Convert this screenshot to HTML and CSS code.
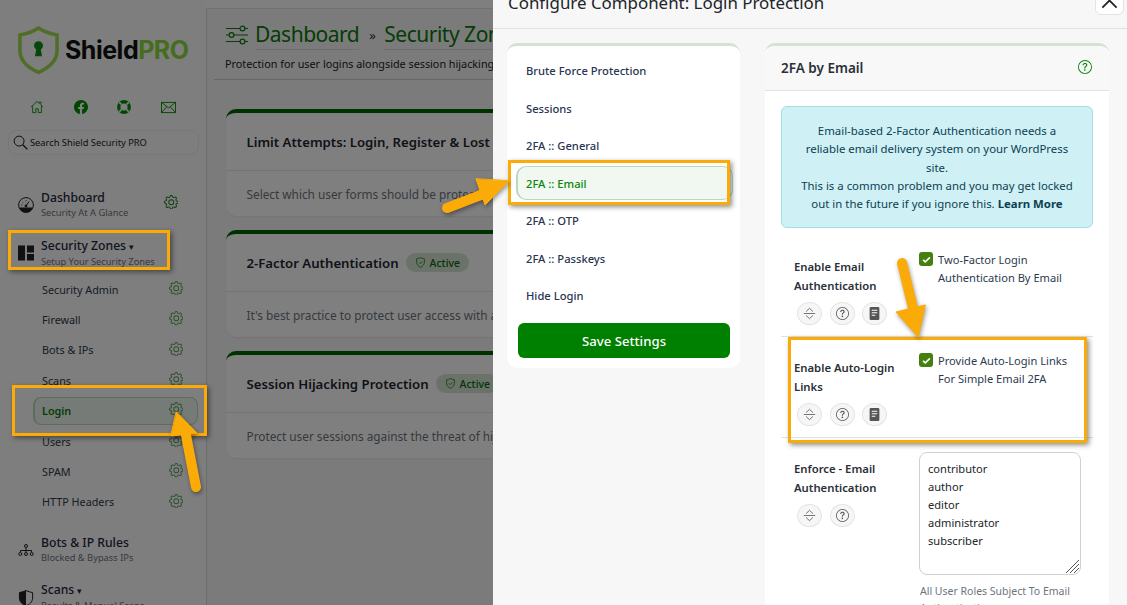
FILE: index.html
```html
<!DOCTYPE html>
<html lang="en">
<head>
<meta charset="utf-8">
<title>Shield Security PRO</title>
<link rel="stylesheet" href="styles.css">
</head>
<body>
<svg class="defs" width="0" height="0" aria-hidden="true">
  <symbol id="gear" viewBox="0 0 16 16">
    <path d="M8 4.754a3.246 3.246 0 1 0 0 6.492 3.246 3.246 0 0 0 0-6.492zM5.754 8a2.246 2.246 0 1 1 4.492 0 2.246 2.246 0 0 1-4.492 0z"/>
    <path d="M9.796 1.343c-.527-1.79-3.065-1.79-3.592 0l-.094.319a.873.873 0 0 1-1.255.52l-.292-.16c-1.64-.892-3.433.902-2.54 2.541l.159.292a.873.873 0 0 1-.52 1.255l-.319.094c-1.79.527-1.79 3.065 0 3.592l.319.094a.873.873 0 0 1 .52 1.255l-.16.292c-.892 1.64.901 3.434 2.541 2.54l.292-.159a.873.873 0 0 1 1.255.52l.094.319c.527 1.79 3.065 1.79 3.592 0l.094-.319a.873.873 0 0 1 1.255-.52l.292.16c1.64.893 3.434-.902 2.54-2.541l-.159-.292a.873.873 0 0 1 .52-1.255l.319-.094c1.79-.527 1.79-3.065 0-3.592l-.319-.094a.873.873 0 0 1-.52-1.255l.16-.292c.893-1.64-.902-3.433-2.541-2.54l-.292.159a.873.873 0 0 1-1.255-.52l-.094-.319zm-2.633.283c.246-.835 1.428-.835 1.674 0l.094.319a1.873 1.873 0 0 0 2.693 1.115l.291-.16c.764-.415 1.6.42 1.184 1.185l-.159.292a1.873 1.873 0 0 0 1.116 2.692l.318.094c.835.246.835 1.428 0 1.674l-.319.094a1.873 1.873 0 0 0-1.115 2.693l.16.291c.415.764-.42 1.6-1.185 1.184l-.291-.159a1.873 1.873 0 0 0-2.693 1.116l-.094.318c-.246.835-1.428.835-1.674 0l-.094-.319a1.873 1.873 0 0 0-2.692-1.115l-.292.16c-.764.415-1.6-.42-1.184-1.185l.159-.291A1.873 1.873 0 0 0 1.945 8.93l-.319-.094c-.835-.246-.835-1.428 0-1.674l.319-.094A1.873 1.873 0 0 0 3.06 4.377l-.16-.292c-.415-.764.42-1.6 1.185-1.184l.292.159a1.873 1.873 0 0 0 2.692-1.115l.094-.319z"/>
  </symbol>
  <symbol id="question" viewBox="0 0 16 16">
    <path d="M8 15A7 7 0 1 1 8 1a7 7 0 0 1 0 14zm0 1A8 8 0 1 0 8 0a8 8 0 0 0 0 16z"/>
    <path d="M5.255 5.786a.237.237 0 0 0 .241.247h.825c.138 0 .248-.113.266-.25.09-.656.54-1.134 1.342-1.134.686 0 1.314.343 1.314 1.168 0 .635-.374.927-.965 1.371-.673.489-1.206 1.06-1.168 1.987l.003.217a.25.25 0 0 0 .25.246h.811a.25.25 0 0 0 .25-.25v-.105c0-.718.273-.927 1.01-1.486.609-.463 1.244-.977 1.244-2.056 0-1.511-1.276-2.241-2.673-2.241-1.267 0-2.655.59-2.75 2.286zm1.557 5.763c0 .533.425.927 1.01.927.609 0 1.028-.394 1.028-.927 0-.552-.42-.94-1.029-.94-.584 0-1.009.388-1.009.94z"/>
  </symbol>
  <symbol id="expand" viewBox="0 0 16 16">
    <path d="M1 8h14" fill="none" stroke="currentColor" stroke-width="1"/>
    <path d="M3.8 5.6 8 1.6l4.2 4M3.8 10.4 8 14.4l4.2-4" fill="none" stroke="currentColor" stroke-width="1"/>
  </symbol>
  <symbol id="doc" viewBox="0 0 16 16">
    <path d="M3.6 0h8.8A1.6 1.6 0 0 1 14 1.6v12.8a1.6 1.6 0 0 1-1.6 1.6H3.6A1.6 1.6 0 0 1 2 14.4V1.6A1.6 1.6 0 0 1 3.6 0z"/>
    <path d="M4.6 3.4h6.8v1.3H4.6zM4.6 6.4h6.8v1.3H4.6zM4.6 9.4h4.4v1.3H4.6z" fill="#fff"/>
  </symbol>
</svg>

<div class="page">
  <aside class="sidebar">
    <div class="logo">
      <svg class="logo-mark" viewBox="0 0 42 50" width="41" height="49">
        <path d="M21 2 C15 6 8 8 2 9 V25 C2 36 11 43 21 47.500 C31 43 40 36 40 25 V9 C34 8 27 6 21 2 Z" fill="none" stroke="#9fdc4f" stroke-width="3.600"/>
        <circle cx="21" cy="20" r="4.600" fill="#0f8f12"/>
        <path d="M19 22h4l1.600 9h-7.200z" fill="#0f8f12"/>
      </svg>
      <span class="logo-text">Shield<b>PRO</b></span>
    </div>
    <div class="quick">
      <svg viewBox="0 0 16 16" width="14" height="14" class="qi"><path d="M1 8.200 8 1.600l2.600 2.400V2.400h2v3.400L15 8.200M3 7v7.400h3.600v-4.400h2.800v4.400H13V7" fill="none" stroke="currentColor"/></svg>
      <svg viewBox="0 0 16 16" width="14" height="14" class="qi" fill="currentColor"><path d="M16 8.049c0-4.446-3.582-8.05-8-8.05C3.58 0-.002 3.603-.002 8.05c0 4.017 2.926 7.347 6.75 7.951v-5.625h-2.03V8.05H6.75V6.275c0-2.017 1.195-3.131 3.022-3.131.876 0 1.791.157 1.791.157v1.98h-1.009c-.993 0-1.303.621-1.303 1.258v1.51h2.218l-.354 2.326H9.25V16c3.824-.604 6.75-3.934 6.75-7.951z"/></svg>
      <svg viewBox="0 0 16 16" width="14" height="14" class="qi"><circle cx="8" cy="8" r="6" fill="none" stroke="currentColor" stroke-width="3.800"/><path d="M2.600 2.600 5 5M13.400 2.600 11 5M2.600 13.400 5 11M13.400 13.400 11 11" stroke="#fff" stroke-width="2"/></svg>
      <svg viewBox="0 0 16 14" width="15" height="13" class="qi"><rect x=".5" y="1.500" width="15" height="11" fill="none" stroke="currentColor"/><path d="M.5 1.500 8 7.500l7.500-6M.5 12.500 6 6.200M15.500 12.500 10 6.200" fill="none" stroke="currentColor"/></svg>
    </div>
    <div class="search">
      <svg viewBox="0 0 16 16" width="15" height="15"><circle cx="6.500" cy="6.500" r="5.300" fill="none" stroke="#111" stroke-width="1"/><path d="m10.400 10.400 5 5" stroke="#111" stroke-width="1.300"/></svg>
      <span>Search Shield Security PRO</span>
    </div>
    <nav class="nav">
      <div class="nav-main">
        <svg viewBox="0 0 16 16" width="16" height="16" class="nav-ic"><circle cx="8" cy="8" r="7.400" fill="none" stroke="#222" stroke-width="1"/><path d="M1.200 10.400h13.600A7.400 7.400 0 0 1 8 15.400a7.400 7.400 0 0 1-6.800-5z" fill="#222"/><circle cx="8" cy="9" r="1.400" fill="#222"/><path d="m8 9 3-4.400" stroke="#222"/><path d="M3.400 8h1M4.600 5.200l.7.6M8 3.400v1" stroke="#222"/></svg>
        <div class="nav-txt"><div class="nav-title">Dashboard</div><div class="nav-sub">Security At A Glance</div></div>
        <svg class="gear gear-main"><use href="#gear"/></svg>
      </div>
      <div class="nav-main">
        <svg viewBox="0 0 16 16" width="16" height="16" class="nav-ic"><path d="M0 .5h7v15H0zM9 .5h7v7H9zM9 9h7v6.500H9z" fill="#222"/></svg>
        <div class="nav-txt"><div class="nav-title">Security Zones <span class="caret">▾</span></div><div class="nav-sub">Setup Your Security Zones</div></div>
      </div>
      <ul class="nav-list">
        <li>Security Admin<svg class="gear"><use href="#gear"/></svg></li>
        <li>Firewall<svg class="gear"><use href="#gear"/></svg></li>
        <li>Bots &amp; IPs<svg class="gear"><use href="#gear"/></svg></li>
        <li>Scans<svg class="gear"><use href="#gear"/></svg></li>
        <li class="on">Login<svg class="gear"><use href="#gear"/></svg></li>
        <li>Users<svg class="gear"><use href="#gear"/></svg></li>
        <li>SPAM<svg class="gear"><use href="#gear"/></svg></li>
        <li>HTTP Headers<svg class="gear"><use href="#gear"/></svg></li>
      </ul>
      <div class="nav-main nav-gap">
        <svg viewBox="0 0 16 12" width="16" height="12" class="nav-ic"><path d="M8 4v2.500M2.500 8V6.500h11V8M8 6.500V8" fill="none" stroke="#222"/><circle cx="8" cy="2" r="1.500" fill="none" stroke="#222"/><circle cx="2.300" cy="10" r="1.500" fill="none" stroke="#222"/><circle cx="8" cy="10" r="1.500" fill="none" stroke="#222"/><circle cx="13.700" cy="10" r="1.500" fill="none" stroke="#222"/></svg>
        <div class="nav-txt"><div class="nav-title">Bots &amp; IP Rules</div><div class="nav-sub">Blocked &amp; Bypass IPs</div></div>
      </div>
      <div class="nav-main">
        <svg viewBox="0 0 16 16" width="16" height="16" class="nav-ic"><path d="M8 .6C5.800 1.500 3.600 2.200 1.400 2.600v5.200C1.400 12 4.500 14.600 8 15.600c3.500-1 6.600-3.600 6.600-7.800V2.600C12.400 2.200 10.200 1.500 8 .6z" fill="none" stroke="#222"/><path d="M8 .6v15C4.500 14.600 1.400 12 1.400 7.800V2.600C3.600 2.200 5.800 1.500 8 .6z" fill="#222"/></svg>
        <div class="nav-txt"><div class="nav-title">Scans <span class="caret">▾</span></div><div class="nav-sub">Results &amp; Manual Scans</div></div>
      </div>
    </nav>
  </aside>

  <main class="main">
    <div class="crumbs">
      <svg viewBox="0 0 22 20" width="22" height="20" class="crumb-ic"><path d="M0 3.500h14M19 3.500h3M0 10h3M8 10h14M0 16.500h14M19 16.500h3" stroke="currentColor" fill="none" stroke-width="1.200"/><circle cx="16.500" cy="3.500" r="2.400" fill="none" stroke="currentColor" stroke-width="1.200"/><circle cx="5.500" cy="10" r="2.400" fill="none" stroke="currentColor" stroke-width="1.200"/><circle cx="16.500" cy="16.500" r="2.400" fill="none" stroke="currentColor" stroke-width="1.200"/></svg>
      <span class="crumb">Dashboard</span><span class="crumb-sep">»</span><span class="crumb">Security Zones</span>
    </div>
    <p class="lede">Protection for user logins alongside session hijacking protection</p>
    <section class="card">
      <h3 class="card-head">Limit Attempts: Login, Register &amp; Lost Password</h3>
      <p class="card-body">Select which user forms should be protected</p>
    </section>
    <section class="card">
      <h3 class="card-head">2-Factor Authentication <span class="badge"><svg viewBox="0 0 16 16" width="11" height="11"><path d="M8 1C6 1.800 4.300 2.400 2.300 2.700v4.800C2.300 11 5 13.700 8 15c3-1.300 5.700-4 5.700-7.500V2.700C11.700 2.400 10 1.800 8 1z" fill="none" stroke="currentColor"/><path d="m5.500 7.700 2 2 3.200-3.400" fill="none" stroke="currentColor"/></svg>Active</span></h3>
      <p class="card-body">It's best practice to protect user access with at least 1 additional factor</p>
    </section>
    <section class="card">
      <h3 class="card-head">Session Hijacking Protection <span class="badge"><svg viewBox="0 0 16 16" width="11" height="11"><path d="M8 1C6 1.800 4.300 2.400 2.300 2.700v4.800C2.300 11 5 13.700 8 15c3-1.300 5.700-4 5.700-7.500V2.700C11.700 2.400 10 1.800 8 1z" fill="none" stroke="currentColor"/><path d="m5.500 7.700 2 2 3.200-3.400" fill="none" stroke="currentColor"/></svg>Active</span></h3>
      <p class="card-body">Protect user sessions against the threat of hijacking</p>
    </section>
  </main>

  <div class="backdrop"></div>

  <aside class="panel">
    <header class="panel-head">
      <h2>Configure Component: Login Protection</h2>
      <button class="close" aria-label="Close"><svg viewBox="0 0 16 16" width="19" height="19"><path d="M2 2 14 14M14 2 2 14" stroke="#222" stroke-width="1.500" fill="none"/></svg></button>
    </header>
    <div class="panel-body">
      <div class="menu">
        <a>Brute Force Protection</a>
        <a>Sessions</a>
        <a>2FA :: General</a>
        <a class="on">2FA :: Email</a>
        <a>2FA :: OTP</a>
        <a>2FA :: Passkeys</a>
        <a>Hide Login</a>
        <button class="save">Save Settings</button>
      </div>
      <div class="form">
        <div class="form-head"><h3>2FA by Email</h3><svg class="help"><use href="#question"/></svg></div>
        <div class="form-body">
          <div class="alert">Email-based 2-Factor Authentication needs a reliable email delivery system on your WordPress site.<br>This is a common problem and you may get locked out in the future if you ignore this. <b>Learn More</b></div>
          <div class="opt opt-first">
            <div class="opt-l">
              <div class="opt-name">Enable Email Authentication</div>
              <div class="opt-tools">
                <span class="tool"><svg><use href="#expand"/></svg></span><span class="tool"><svg><use href="#question"/></svg></span><span class="tool"><svg><use href="#doc"/></svg></span>
              </div>
            </div>
            <label class="check"><span class="box"><svg viewBox="0 0 16 16" width="11" height="11"><path d="m3 8.500 3.200 3L13 5" fill="none" stroke="#fff" stroke-width="2.400"/></svg></span><span>Two-Factor Login Authentication By Email</span></label>
          </div>
          <div class="opt">
            <div class="opt-l">
              <div class="opt-name">Enable Auto-Login Links</div>
              <div class="opt-tools">
                <span class="tool"><svg><use href="#expand"/></svg></span><span class="tool"><svg><use href="#question"/></svg></span><span class="tool"><svg><use href="#doc"/></svg></span>
              </div>
            </div>
            <label class="check"><span class="box"><svg viewBox="0 0 16 16" width="11" height="11"><path d="m3 8.500 3.200 3L13 5" fill="none" stroke="#fff" stroke-width="2.400"/></svg></span><span>Provide Auto-Login Links For Simple Email 2FA</span></label>
          </div>
          <div class="opt opt-last">
            <div class="opt-l">
              <div class="opt-name">Enforce - Email Authentication</div>
              <div class="opt-tools">
                <span class="tool"><svg><use href="#expand"/></svg></span><span class="tool"><svg><use href="#question"/></svg></span>
              </div>
            </div>
            <div class="opt-r">
              <div class="roles">contributor<br>author<br>editor<br>administrator<br>subscriber<svg class="grip" viewBox="0 0 14 14" width="14" height="14"><path d="M1 14 14 1M5 14 14 5M9 14 14 9" stroke="#555" fill="none"/></svg></div>
              <p class="hint">All User Roles Subject To Email Authentication</p>
            </div>
          </div>
        </div>
      </div>
    </div>
  </aside>

  <div class="mark mark-zones"></div>
  <div class="mark mark-login"></div>
  <div class="mark mark-email"></div>
  <div class="mark mark-auto"></div>
  <svg class="arrows" viewBox="0 0 1127 605" width="1127" height="605">
    <g class="arrow">
      <path d="M196 487 185 430"/><path class="head" d="M176.500 412 197 433 171 436z"/>
      <path d="M447 208 486 193"/><path class="head" d="M509 181 485 205 476 179z"/>
      <path d="M902 263 914 312"/><path class="head" d="M918 337 896 312 925 305z"/>
    </g>
  </svg>
</div>
</body>
</html>
```

FILE: styles.css
```css
* { box-sizing: border-box; }
html, body { margin: 0; padding: 0; height: 100%; }
body { font-family: "Noto Sans", "Open Sans", sans-serif; color: #212529; background: #fff; overflow: hidden; }
.defs { position: absolute; }
svg { display: block; flex: none; fill: currentColor; }

.page { position: relative; width: 1127px; height: 605px; overflow: hidden; display: flex; background: #fff; }

/* Sidebar */
.sidebar { width: 206px; flex: none; background: #fcfcfc; padding: 25px 8px 0; }
.logo { display: flex; align-items: center; gap: 6px; padding-left: 10px; height: 50px; }
.logo-mark { width: 41px; height: 49px; }
.logo-text { font-family: "Inter", sans-serif; font-weight: 700; font-size: 25px; letter-spacing: -.5px; color: #111; }
.logo-text b { color: #8ddb3a; font-weight: 700; }
.quick { display: flex; justify-content: space-between; align-items: center; padding: 0 22px; margin-top: 24px; height: 16px; color: #008f00; }
.search { display: flex; align-items: center; gap: 2px; margin-top: 15px; height: 25px; width: 191px; padding-left: 4px; border: 1px solid #efefef; border-radius: 8px; font-size: 9.300px; color: #222; }
.nav { margin-top: 26px; }
.nav-main { display: flex; align-items: center; height: 48px; padding: 0 10px; position: relative; }
.nav-ic { margin-right: 7px; }
.nav-txt { flex: 1; padding-bottom: 1px; }
.nav-title { font-size: 12.200px; line-height: 15px; font-weight: 500; color: #1f2a40; }
.nav-sub { margin-top: 1px; font-size: 9.300px; line-height: 13px; color: #6c757d; }
.caret { font-size: 9px; }
.gear { width: 14.500px; height: 14.500px; color: #1b7a1b; }
.gear-main { margin-right: 10px; margin-top: -6px; }
.nav-list { list-style: none; margin: -3px 0 0; padding: 0; }
.nav-list li { display: flex; align-items: center; justify-content: space-between; height: 30.400px; margin-left: 25px; padding: 0 15px 0 9px; font-size: 10.800px; color: #2e3a4a; }
.nav-list li.on { color: #0a7a0a; font-weight: 600; background: #eef6ee; border: 1px solid #bcd6bc; border-left-width: 2px; border-radius: 8px; height: 28px; margin-top: 1px; margin-bottom: 1.300px; padding-left: 7px; padding-right: 14px; }
.nav-list .gear { color: #5aa05a; margin-top: -2px; }
.nav-gap { margin-top: 8.500px; }

/* Main */
.main { flex: none; width: 921px; margin-top: 8px; border-left: 1px solid #cfe0cf; border-top: 1px solid #dfe6df; background: #f6f6f6; padding: 0 0 0 19px; }
.crumbs { display: flex; align-items: center; height: 51px; color: #0a7a0a; font-size: 21px; letter-spacing: -.5px; white-space: nowrap; }
.crumb-ic { margin-right: 7px; }
.crumb { border-bottom: 1px solid #ddd; line-height: 29px; }
.crumb-sep { font-size: 13px; margin: 0 9px 0 10px; color: #333; }
.lede { margin: -3px 0 0 -12px; padding: 0 0 0 11px; height: 23px; font-size: 10.800px; line-height: 14px; color: #222; border-bottom: 1px solid #cfcfcf; }
.card { width: 640px; height: 107px; margin: 0 0 14px; background: #fff; border-top: 4px solid #006400; border-radius: 10px; overflow: hidden; box-shadow: 0 1px 2px rgba(0,0,0,.06); }
.lede + .card { margin-top: 29px; }
.card-head { margin: 0; height: 58px; padding-left: 20.500px; display: flex; align-items: center; gap: 7px; font-size: 13.200px; font-weight: 600; color: #1f2530; white-space: nowrap; border-bottom: 1px solid #e6e6e6; }
.card-body { margin: 0; padding: 15px 0 0 20.500px; font-size: 11.800px; color: #6c757d; white-space: nowrap; }
.badge { display: inline-flex; align-items: center; gap: 4px; height: 19px; padding: 0 9px; border-radius: 10px; background: #d4e5d4; color: #0a6a0a; font-size: 10.500px; font-weight: 500; }

.backdrop { position: absolute; inset: 0; background: rgba(0,0,0,.5); }

/* Panel */
.panel { position: absolute; top: 0; right: 0; bottom: 0; width: 634px; background: #f7f7f7; overflow: hidden; }
.panel-head { height: 29px; border-bottom: 1px solid #dee2e6; padding: 0 2px 0 15px; position: relative; }
.panel-head h2 { margin: 0; font-size: 16.900px; line-height: 22px; font-weight: 400; color: #212529; position: relative; top: -8px; white-space: nowrap; }
.close { position: absolute; right: 3px; top: -14px; width: 29px; height: 29px; border: 1px solid #e4e4e4; border-radius: 6px; background: #fff; padding: 0; display: flex; align-items: center; justify-content: center; }
.panel-body { display: flex; align-items: flex-start; gap: 25px; padding: 14px 18px 0 14px; }

.menu { width: 233px; height: 325px; padding: 6px 10px 0 9px; background: #fff; border-top: 3px solid #d5e1d5; border-radius: 10px; display: flex; flex-direction: column; }
.menu a { display: flex; align-items: center; height: 37.500px; padding-left: 10px; font-size: 11.200px; font-weight: 500; color: #2a3550; }
.menu a.on { height: 34px; margin: 1.500px -3px 2.200px 0; background: #f1f8f1; color: #0a850a; border: 1px solid #bcd8bc; border-left-width: 2px; border-radius: 10px; padding-left: 8px; }
.save { margin-top: 8.500px; margin-left: 2px; width: 212px; height: 35px; border: 0; border-radius: 6px; background: #008000; color: #fff; font: 500 13.200px "Noto Sans", sans-serif; }

.form { width: 344px; height: 640px; background: #fff; border-top: 3px solid #d5e1d5; border-radius: 10px 10px 0 0; }
.form-head { height: 45px; display: flex; align-items: center; justify-content: space-between; padding: 0 17px 0 16px; background: #f8f8f8; border-bottom: 1px solid #dee2e6; border-radius: 10px 10px 0 0; }
.form-head h3 { margin: 0; font-size: 13.500px; font-weight: 600; color: #2b2f38; }
.help { width: 14px; height: 14px; margin-top: -3px; color: #0a850a; }
.form-body { padding: 15px 16px 0; }
.alert { background: #cff0f5; border: 1px solid #a3dde8; border-radius: 6px; height: 122px; padding: 15px 16px 0; text-align: center; font-size: 11.400px; line-height: 18.300px; color: #0c3f52; }
.alert b { font-weight: 700; }
.opt { display: flex; height: 101px; padding: 21px 0 0 13px; border-bottom: 1px solid #dfe3e3; }
.opt-first { height: 109px; padding-top: 29px; }
.opt-l { width: 125px; flex: none; }
.opt-name { font-size: 11.300px; font-weight: 600; line-height: 19px; color: #2b2f38; width: 115px; }
.opt-tools { display: flex; gap: 7.500px; margin-top: 7px; padding-left: 3px; }
.tool { width: 25px; height: 23px; border: 1px solid #e2e4e2; border-radius: 50%; background: #f5f6f5; display: flex; align-items: center; justify-content: center; color: #555; }
.tool svg { width: 13px; height: 13px; }
.check { display: flex; gap: 5px; width: 162px; font-size: 11.100px; line-height: 18px; color: #2c3a50; margin-top: -6px; align-self: flex-start; }
.box { width: 14px; height: 14px; margin-top: 1px; border-radius: 3px; background: #44800f; display: flex; align-items: center; justify-content: center; flex: none; }
.opt-last { border: 0; padding-top: 14px; }
.opt-last .opt-name { margin-top: 7px; }
.opt-r { width: 162px; }
.roles { position: relative; height: 123px; padding: 7px 8px; border: 1px solid #ccd2d2; border-radius: 8px; font-size: 11.100px; line-height: 18px; color: #212529; background: #fff; }
.grip { position: absolute; right: 1px; bottom: 1px; }
.hint { margin: 8px 0 0 1px; font-size: 10.500px; line-height: 17px; color: #6c757d; }

/* Annotations */
.mark { position: absolute; border: 3px solid #fbab07; box-shadow: 2px 2px 5px rgba(0,0,0,.45); }
.mark-zones { left: 8px; top: 230px; width: 162px; height: 40px; }
.mark-login { left: 12px; top: 385px; width: 195px; height: 51px; }
.mark-email { left: 508px; top: 160px; width: 222px; height: 45px; }
.mark-auto { left: 788px; top: 337px; width: 299px; height: 106px; }
.arrows { position: absolute; left: 0; top: 0; pointer-events: none; }
.arrow { filter: drop-shadow(1px 2px 2px rgba(0,0,0,.4)); }
.arrow path { fill: none; stroke: #fbab07; stroke-width: 10; stroke-linecap: round; }
.arrow .head { fill: #fbab07; stroke-width: 1; stroke-linejoin: round; }
```
